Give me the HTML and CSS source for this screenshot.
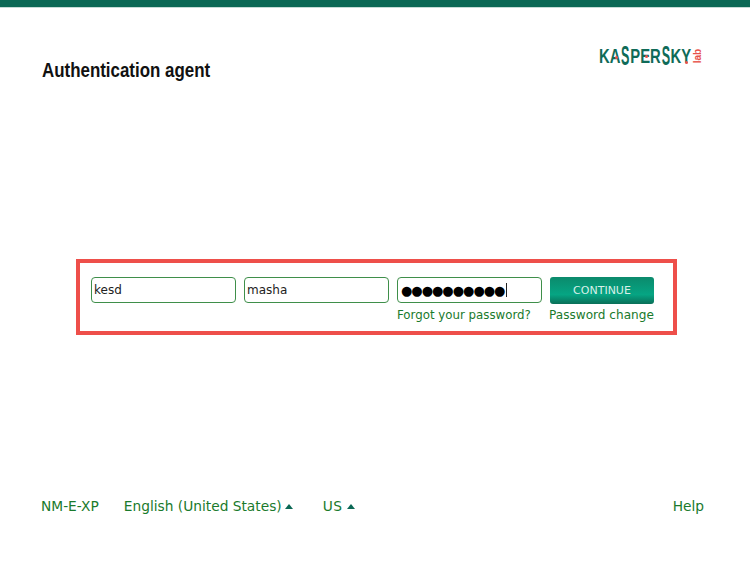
FILE: index.html
```html
<!DOCTYPE html>
<html lang="en">
<head>
	<meta charset="UTF-8">
	<title>Authentication agent</title>
	<link rel="stylesheet" href="styles.css">
</head>
<body>
	<div class="topbar"></div>

	<div class="header">
		<h1 class="title">Authentication agent</h1>
		<div class="logo">
			<span class="logo-word">KA<span class="logo-s">S</span>PER<span class="logo-s">S</span>KY</span>
			<span class="logo-lab">lab</span>
			<i class="logo-dot dot-a"></i>
			<i class="logo-dot dot-e"></i>
			<i class="logo-dot dot-y"></i>
		</div>
	</div>

	<div class="login-frame">
		<input type="text" class="styled-input" value="kesd">
		<input type="text" class="styled-input" value="masha">
		<div class="styled-input password"><span class="dots">●●●●●●●●●●</span><span class="caret"></span></div>
		<button class="continue">CONTINUE</button>
		<a class="link forgot" href="#">Forgot your password?</a>
		<a class="link change" href="#">Password change</a>
	</div>

	<div class="footer">
		<span class="foot-item host">NM-E-XP</span>
		<span class="foot-item lang">English (United States)<i class="arrow"></i></span>
		<span class="foot-item region">US<i class="arrow"></i></span>
		<a class="foot-item help" href="#">Help</a>
	</div>
</body>
</html>
```

FILE: styles.css
```css
html, body {
	margin: 0;
	height: 563px;
	overflow: hidden;
}

body {
	display: flex;
	flex-direction: column;
	background-color: white;
	font-family: 'DejaVu Sans', sans-serif;
	color: #1a7a2c;
}

.topbar {
	height: 7px;
	flex: none;
	background-color: #0b6855;
	border-bottom: 1px solid #c5dbd6;
}

.header {
	display: flex;
	justify-content: space-between;
	align-items: flex-start;
	height: 251px;
	flex: none;
	padding: 0 47px 0 42px;
}

.title {
	margin: 49px 0 0;
	font-family: 'Liberation Sans', sans-serif;
	font-size: 21px;
	line-height: 26px;
	font-weight: bold;
	color: #111;
	white-space: nowrap;
	transform: scaleX(0.805);
	transform-origin: left center;
}

.logo {
	position: relative;
	display: flex;
	width: 104px;
	height: 24px;
	margin-top: 36px;
}

.logo-word {
	display: block;
	font-family: 'Liberation Sans', sans-serif;
	font-size: 21px;
	line-height: 24px;
	font-weight: bold;
	color: #0f6b58;
	white-space: nowrap;
	transform: scaleX(0.705);
	transform-origin: left center;
}

.logo-s {
	display: inline-block;
	transform: scale(0.85, 1.3);
}

.logo-lab {
	position: absolute;
	right: -2px;
	top: 7px;
	font-family: 'Liberation Sans', sans-serif;
	font-size: 10px;
	line-height: 10px;
	font-weight: bold;
	color: #e8524a;
	transform: rotate(-90deg);
}

.logo-dot {
	position: absolute;
	width: 3px;
	height: 3px;
	border-radius: 50%;
	background-color: #e8524a;
}

.dot-a {
	left: 16px;
	top: 12px;
}

.dot-e {
	left: 46px;
	top: 11px;
}

.dot-y {
	left: 86px;
	top: 17px;
}

.login-frame {
	display: grid;
	grid-template-columns: 145px 145px 145px 104px;
	grid-template-rows: 26px auto;
	column-gap: 8px;
	row-gap: 4px;
	align-content: start;
	box-sizing: border-box;
	width: 601px;
	height: 76px;
	flex: none;
	margin-left: 76px;
	padding: 14px 11px 0;
	border: 4px solid #ee4f4a;
}

.styled-input {
	box-sizing: border-box;
	width: 145px;
	height: 26px;
	padding: 0 2px;
	font-family: 'DejaVu Sans', sans-serif;
	font-size: 12px;
	color: #222;
	background-color: white;
	border: 1px solid #3f8f4a;
	border-radius: 4px;
	outline: none;
}

.password {
	display: flex;
	align-items: center;
	padding-left: 3px;
}

.dots {
	font-size: 13px;
	letter-spacing: -1px;
	color: black;
	line-height: 1;
	white-space: nowrap;
}

.caret {
	width: 1px;
	height: 14px;
	margin-left: 2px;
	background-color: #222;
}

.continue {
	height: 27px;
	padding: 0;
	font-family: 'DejaVu Sans', sans-serif;
	font-size: 11px;
	color: #d9efe8;
	border: none;
	border-radius: 3px;
	background: linear-gradient(#0b8a6c, #06a583 65%, #0a6f58);
}

.link {
	font-size: 11.8px;
	line-height: 16px;
	color: #1a7a2c;
	text-decoration: none;
	white-space: nowrap;
}

.forgot {
	grid-column: 3;
	grid-row: 2;
}

.change {
	grid-column: 4;
	grid-row: 2;
	margin-left: -1px;
	font-size: 12.1px;
}

.footer {
	display: flex;
	align-items: center;
	height: 24px;
	margin-top: 159px;
	padding: 0 46px 0 41px;
	font-size: 13.75px;
}

.foot-item {
	color: #1a7a2c;
	text-decoration: none;
	white-space: nowrap;
}

.lang {
	margin-left: 25px;
}

.lang .arrow {
	margin-left: 3px;
}

.region {
	margin-left: 30px;
	letter-spacing: 0.5px;
}

.region .arrow {
	margin-left: 5px;
}

.help {
	margin-left: auto;
}

.arrow {
	display: inline-block;
	margin-left: 4px;
	vertical-align: 2px;
	border-left: 4px solid transparent;
	border-right: 4px solid transparent;
	border-bottom: 5px solid #0b6855;
}
```
